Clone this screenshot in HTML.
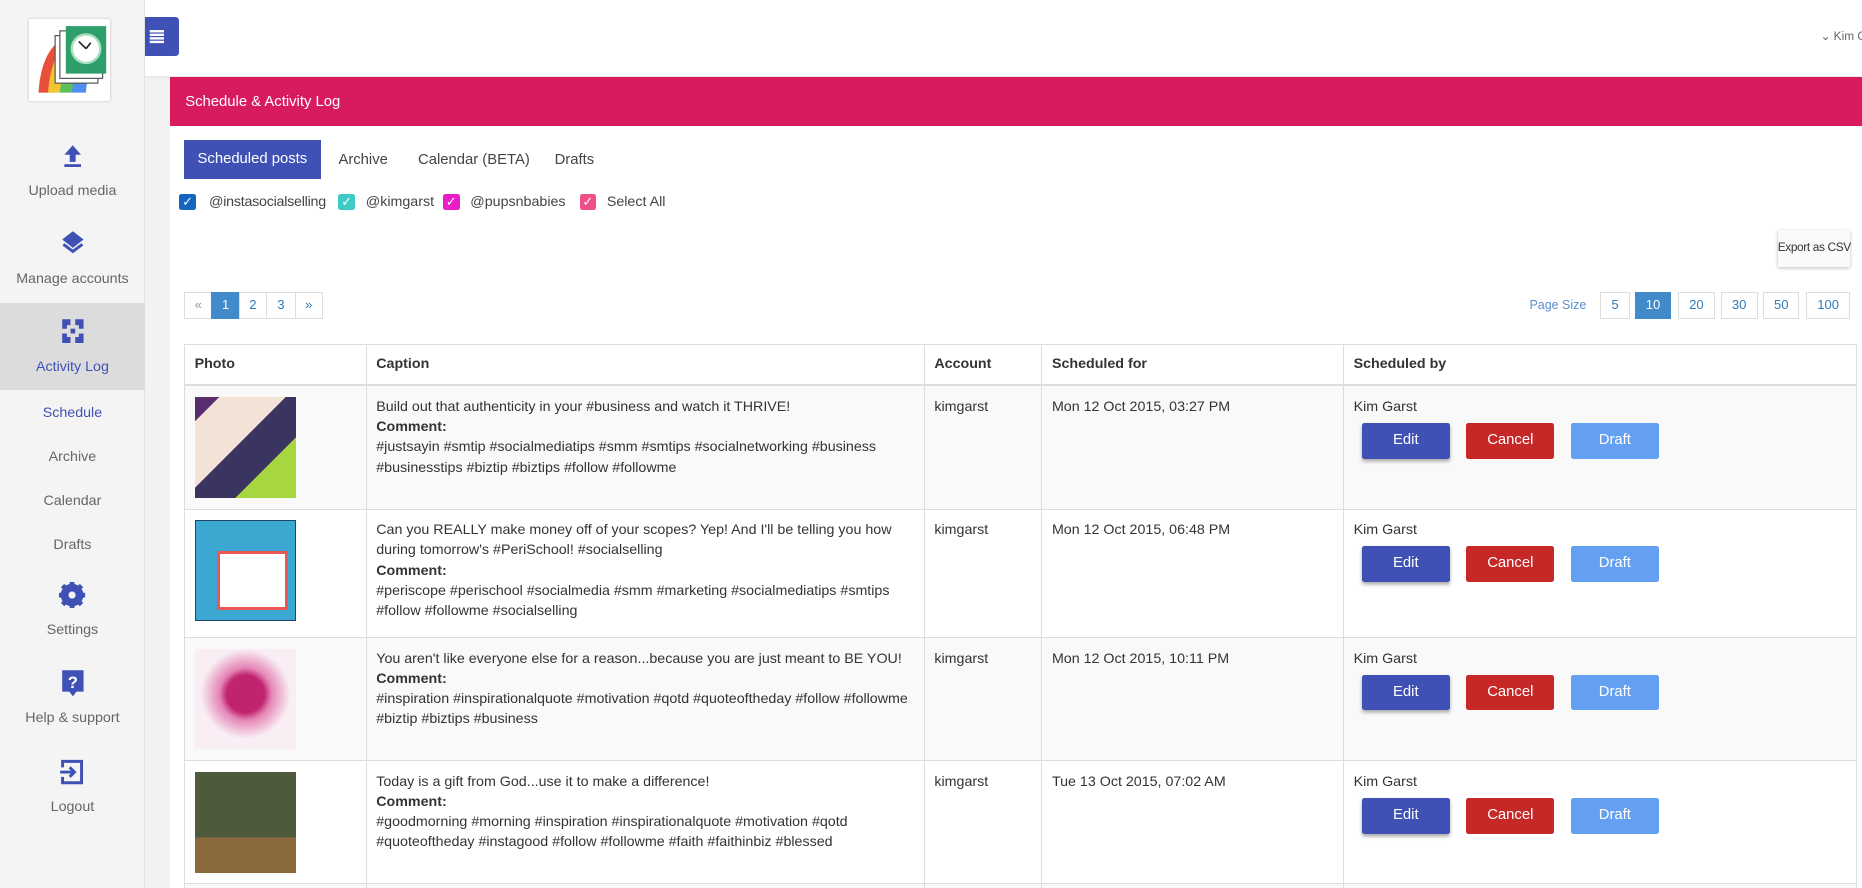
<!DOCTYPE html>
<html><head><meta charset="utf-8"><style>
*{box-sizing:border-box;margin:0;padding:0}
html,body{width:1862px;height:888px;overflow:hidden;background:#f2f2f2}
#root{zoom:1.1875;width:1568px;height:748px;position:relative;font-family:"Liberation Sans",sans-serif;font-size:12px;color:#333}
.side{position:absolute;left:0;top:0;width:122px;height:748px;background:#f4f4f4;border-right:1px solid #e4e4e4}
.logo{position:absolute;left:24px;top:16px;width:69px;height:69px;background:#fff;box-shadow:0 0 2px #bbb}
.nav{position:absolute;left:0;width:122px;text-align:center;color:#666;font-size:12px}
.nav svg{display:block;margin:0 auto}
.sub{position:absolute;left:0;width:122px;text-align:center;color:#666;font-size:12px}
.top{position:absolute;left:122px;top:0;width:1446px;height:64px;background:#fff;box-shadow:0 1px 2px #ddd}
.tog{position:absolute;left:122px;top:14px;width:29px;height:33px;background:#3f51b5;border-radius:0 3px 3px 0}
.panel{position:absolute;left:143px;top:65px;width:1425px;height:683px;background:#fff}
.hdr{height:41px;background:#d81b5e;color:#fff;font-size:12.5px;padding:14px 0 0 13px}
.abs{position:absolute;white-space:nowrap}
.tab{position:absolute;top:119px;height:33px;line-height:33px;font-size:12.5px;color:#444}
.cb{position:absolute;top:163px;width:14px;height:14px;border-radius:2px;color:#fff;font-size:11px;line-height:14px;text-align:center}
.cbl{position:absolute;top:163px;font-size:12px;color:#444;white-space:nowrap}
.pg{position:absolute;top:246px;height:23px;border:1px solid #ddd;line-height:21px;text-align:center;color:#337ab7;font-size:11px;background:#fff}
table{position:absolute;left:155px;top:290px;width:1409px;border-collapse:collapse;font-size:12px}
td,th{border:1px solid #ddd;vertical-align:top;text-align:left;padding:9px 8px}
th{height:34px;font-weight:bold;border-bottom:2px solid #ddd;color:#333;padding-top:9px}
td{line-height:17px;color:#333}
tr.o td{background:#f9f9f9}
.th{width:85px;height:85px}
.btn{display:inline-block;width:74px;height:30px;line-height:30px;text-align:center;color:#fff;font-size:12.5px;border-radius:2px;margin-top:5px}
.e{background:#3f51b5;margin-left:7px;box-shadow:0 2px 3px #aaa}.c{background:#c62828;margin-left:14px}.d{background:#64a0f2;margin-left:14px}
</style></head><body><div id="root">
<div class="side">
 <div class="logo"><svg width="69" height="69" viewBox="0 0 69 69"><path d="M8 62 Q10 30 26 18 L34 20 Q20 40 20 62Z" fill="#e8503a"/><path d="M16 62 Q18 34 30 22 L40 26 Q28 42 28 62Z" fill="#f5c431"/><path d="M26 62 Q28 40 38 30 L48 34 Q38 46 38 62Z" fill="#5bbf5b"/><path d="M36 62 Q38 46 46 38 L56 42 Q48 50 48 62Z" fill="#4f8ef2"/><rect x="22" y="14" width="36" height="40" fill="#fff" stroke="#555"/><rect x="26" y="10" width="36" height="40" fill="#fff" stroke="#555"/><rect x="31" y="6" width="34" height="40" fill="#2e9e6a"/><circle cx="48" cy="25" r="12" fill="#fff" stroke="#a8e0bf" stroke-width="2"/><path d="M48 25 L42 19 M48 25 L52 20" stroke="#222" stroke-width="1.4"/></svg></div>
 <div class="nav" style="top:121px"><svg width="18" height="20" viewBox="0 0 18 20"><path d="M9 1 L16 9 H11.5 V15 H6.5 V9 H2Z" fill="#3f51b5"/><rect x="2" y="17" width="14" height="2.5" fill="#3f51b5"/></svg><div style="margin-top:13px">Upload media</div></div>
 <div class="nav" style="top:194px"><svg width="20" height="22" viewBox="0 0 20 22"><path d="M10 1 L19 8 L10 15 L1 8Z" fill="#3f51b5"/><path d="M2 12 L10 18 L18 12" stroke="#3f51b5" stroke-width="2.5" fill="none"/></svg><div style="margin-top:12px">Manage accounts</div></div>
 <div style="position:absolute;top:255px;left:0;width:122px;height:73px;background:#dcdcdc"></div>
 <div class="nav" style="top:268px;color:#3f51b5"><svg width="20" height="22" viewBox="0 0 20 22"><path d="M1 1H8V6H5V9H1Z M12 1H19V9H15V6H12Z M1 13H5V16H8V21H1Z M15 13H19V21H12V16H15Z" fill="#3f51b5"/><path d="M8 9H12V13H8Z" fill="#3f51b5"/></svg><div style="margin-top:12px">Activity Log</div></div>
 <div class="sub" style="top:341px;color:#3f51b5">Schedule</div>
 <div class="sub" style="top:378px">Archive</div>
 <div class="sub" style="top:415px">Calendar</div>
 <div class="sub" style="top:452px">Drafts</div>
 <div class="nav" style="top:490px"><svg width="22" height="22" viewBox="0 0 22 22"><circle cx="11" cy="11" r="7" fill="none" stroke="#3f51b5" stroke-width="5"/><path d="M11 0V22M0 11H22M3 3L19 19M19 3L3 19" stroke="#3f51b5" stroke-width="4"/><circle cx="11" cy="11" r="3" fill="#f4f4f4"/></svg><div style="margin-top:12px">Settings</div></div>
 <div class="nav" style="top:563px"><svg width="20" height="24" viewBox="0 0 20 24"><path d="M1 1H19V19H13L10 23L7 19H1Z" fill="#3f51b5"/><text x="10" y="16" font-size="14" font-weight="bold" fill="#fff" text-anchor="middle" font-family="Liberation Sans">?</text></svg><div style="margin-top:11px">Help &amp; support</div></div>
 <div class="nav" style="top:639px"><svg width="22" height="22" viewBox="0 0 22 22"><path d="M3 7V2H19V20H3V15" stroke="#3f51b5" stroke-width="2.5" fill="none"/><path d="M1 11H12M9 7L13 11L9 15" stroke="#3f51b5" stroke-width="2.5" fill="none"/></svg><div style="margin-top:12px">Logout</div></div>
</div>
<div class="top"></div>
<div class="tog"><svg width="29" height="33"><g fill="#fff"><rect x="4" y="11" width="12" height="2"/><rect x="4" y="14" width="12" height="2"/><rect x="4" y="17" width="12" height="2"/><rect x="4" y="20" width="12" height="2"/></g></svg></div>
<div class="abs" style="left:1533px;top:24px;color:#666;font-size:10px">⌄ Kim G</div>
<div class="panel"><div class="hdr">Schedule &amp; Activity Log</div></div>
<div class="tab" style="left:155px;width:115px;background:#3f51b5;color:#fff;text-align:center;top:118px">Scheduled posts</div>
<div class="tab" style="left:285px">Archive</div>
<div class="tab" style="left:352px">Calendar (BETA)</div>
<div class="tab" style="left:467px">Drafts</div>
<div class="cb" style="left:151px;background:#1565c0">✓</div><div class="cbl" style="left:176px;letter-spacing:-0.2px">@instasocialselling</div>
<div class="cb" style="left:285px;background:#3ecbc8">✓</div><div class="cbl" style="left:308px">@kimgarst</div>
<div class="cb" style="left:373px;background:#e91ec8">✓</div><div class="cbl" style="left:396px">@pupsnbabies</div>
<div class="cb" style="left:488px;background:#f0508a">✓</div><div class="cbl" style="left:511px">Select All</div>
<div class="abs" style="left:1497px;top:194px;width:61px;height:31px;background:#fafafa;box-shadow:0 1px 3px #bbb;line-height:29px;text-align:center;font-size:10px;color:#333;letter-spacing:-0.3px">Export as CSV</div>
<div class="pg" style="left:155px;width:24px;color:#999">«</div>
<div class="pg" style="left:178px;width:24px;background:#428bca;border-color:#428bca;color:#fff">1</div>
<div class="pg" style="left:201px;width:24px">2</div>
<div class="pg" style="left:224px;width:25px">3</div>
<div class="pg" style="left:248px;width:24px">»</div>
<div class="abs" style="left:1288px;top:251px;color:#5b8ed0;font-size:10.5px">Page Size</div>
<div class="pg" style="left:1347px;width:26px">5</div>
<div class="pg" style="left:1377px;width:30px;background:#428bca;border-color:#428bca;color:#fff">10</div>
<div class="pg" style="left:1413px;width:31px">20</div>
<div class="pg" style="left:1449px;width:31px">30</div>
<div class="pg" style="left:1485px;width:30px">50</div>
<div class="pg" style="left:1521px;width:37px">100</div>
<table>
<tr><th style="width:153px">Photo</th><th style="width:470px">Caption</th><th style="width:99px">Account</th><th style="width:254px">Scheduled for</th><th>Scheduled by</th></tr>
<tr class="o" style="height:101px"><td><div class="th" style="background:linear-gradient(135deg,#5a2d6e 0 12%,#f3e3d6 12% 45%,#3a3560 45% 70%,#a8d640 70%)"></div></td><td>Build out that authenticity in your #business and watch it THRIVE!<br><b>Comment:</b><br>#justsayin #smtip #socialmediatips #smm #smtips #socialnetworking #business #businesstips #biztip #biztips #follow #followme</td><td>kimgarst</td><td>Mon 12 Oct 2015, 03:27 PM</td><td>Kim Garst<br><span class="btn e">Edit</span><span class="btn c">Cancel</span><span class="btn d">Draft</span></td></tr>
<tr style="height:108px"><td><div class="th" style="background:#3aa8d0;border:1px solid #246;position:relative"><div style="position:absolute;left:18px;top:25px;width:60px;height:50px;background:#fff;border:3px solid #e55"></div></div></td><td>Can you REALLY make money off of your scopes? Yep! And I'll be telling you how during tomorrow's #PeriSchool! #socialselling<br><b>Comment:</b><br>#periscope #perischool #socialmedia #smm #marketing #socialmediatips #smtips #follow #followme #socialselling</td><td>kimgarst</td><td>Mon 12 Oct 2015, 06:48 PM</td><td>Kim Garst<br><span class="btn e">Edit</span><span class="btn c">Cancel</span><span class="btn d">Draft</span></td></tr>
<tr class="o" style="height:101px"><td><div class="th" style="background:radial-gradient(circle at 50% 45%,#c0246e 0 25%,#e585b5 35%,#f8eef4 60%)"></div></td><td>You aren't like everyone else for a reason...because you are just meant to BE YOU!<br><b>Comment:</b><br>#inspiration #inspirationalquote #motivation #qotd #quoteoftheday #follow #followme #biztip #biztips #business</td><td>kimgarst</td><td>Mon 12 Oct 2015, 10:11 PM</td><td>Kim Garst<br><span class="btn e">Edit</span><span class="btn c">Cancel</span><span class="btn d">Draft</span></td></tr>
<tr style="height:99px"><td><div class="th" style="background:linear-gradient(180deg,#4e5a3c 0 65%,#8a6a3c 65%)"></div></td><td>Today is a gift from God...use it to make a difference!<br><b>Comment:</b><br>#goodmorning #morning #inspiration #inspirationalquote #motivation #qotd #quoteoftheday #instagood #follow #followme #faith #faithinbiz #blessed</td><td>kimgarst</td><td>Tue 13 Oct 2015, 07:02 AM</td><td>Kim Garst<br><span class="btn e">Edit</span><span class="btn c">Cancel</span><span class="btn d">Draft</span></td></tr>
<tr class="o" style="height:20px"><td></td><td></td><td></td><td></td><td></td></tr>
</table>
</div></body></html>
